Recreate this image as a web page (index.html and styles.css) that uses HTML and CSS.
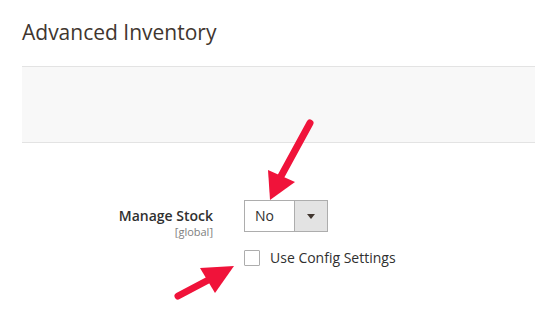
FILE: index.html
```html
<!DOCTYPE html>
<html lang="en">
<head>
    <meta charset="UTF-8">
    <meta name="viewport" content="width=device-width, initial-scale=1.0">
    <title>Advanced Inventory</title>
    <link rel="stylesheet" href="styles.css">
</head>
<body>
    <div class="page">
        <h1 class="title">Advanced Inventory</h1>
        <div class="panel"></div>
        <div class="field">
            <div class="field-label">
                <span class="label-text">Manage Stock</span>
                <span class="scope">[global]</span>
            </div>
            <div class="field-control">
                <div class="select">
                    <span class="select-value">No</span>
                    <span class="select-btn"><span class="caret"></span></span>
                </div>
                <label class="config">
                    <span class="checkbox"></span>
                    <span>Use Config Settings</span>
                </label>
            </div>
        </div>
        <!-- annotation arrows -->
        <svg class="arrows" width="535" height="324" viewBox="0 0 535 324">
            <line x1="310" y1="123" x2="280" y2="178" stroke="#f0133a" stroke-width="7" stroke-linecap="round"/>
            <polygon points="270,200 268,170 295,182" fill="#f0133a"/>
            <line x1="178" y1="296" x2="214" y2="277" stroke="#f0133a" stroke-width="7" stroke-linecap="round"/>
            <polygon points="234,266 200,268 215,293" fill="#f0133a"/>
        </svg>
    </div>
</body>
</html>
```

FILE: styles.css
```css
* {
    box-sizing: border-box;
}
body {
    margin: 0;
    font-family: "Open Sans", Arial, sans-serif;
    color: #303030;
    background: #fff;
}
.page {
    position: relative;
    width: 535px;
    height: 324px;
    padding: 17px 0 0 22px;
    overflow: hidden;
}
.title {
    margin: 0;
    font-size: 21px;
    font-weight: 400;
    line-height: 30px;
    color: #41362f;
}
.panel {
    margin-top: 19px;
    height: 77px;
    border-top: 1px solid #e3e3e3;
    border-bottom: 1px solid #e3e3e3;
    background-color: #f8f8f8;
    background-image: radial-gradient(#efefef 0.5px, transparent 0.7px);
    background-size: 4px 4px;
}
.field {
    display: flex;
    margin-top: 57px;
}
.field-label {
    width: 191px;
    display: flex;
    flex-direction: column;
    align-items: flex-end;
    padding-top: 6px;
}
.label-text {
    font-size: 14px;
    font-weight: 600;
    line-height: 19px;
}
.scope {
    font-size: 11px;
    line-height: 14px;
    color: #808080;
}
.field-control {
    margin-left: 31px;
    display: flex;
    flex-direction: column;
    gap: 16px;
}
.select {
    display: flex;
    width: 84px;
    height: 32px;
    border: 1px solid #adadad;
    font-size: 14px;
}
.select-value {
    flex: 1;
    padding-left: 10px;
    line-height: 30px;
}
.select-btn {
    width: 33px;
    border-left: 1px solid #adadad;
    background: #e3e3e3;
    display: flex;
    align-items: center;
    justify-content: center;
}
.caret {
    width: 0;
    height: 0;
    border-left: 4px solid transparent;
    border-right: 4px solid transparent;
    border-top: 5px solid #41362f;
}
.config {
    display: flex;
    align-items: center;
    gap: 10px;
    font-size: 14px;
    color: #303030;
}
.checkbox {
    width: 16px;
    height: 16px;
    border: 1px solid #adadad;
    border-radius: 1px;
    background: #fff;
}
.arrows {
    position: absolute;
    left: 0;
    top: 0;
}
```
